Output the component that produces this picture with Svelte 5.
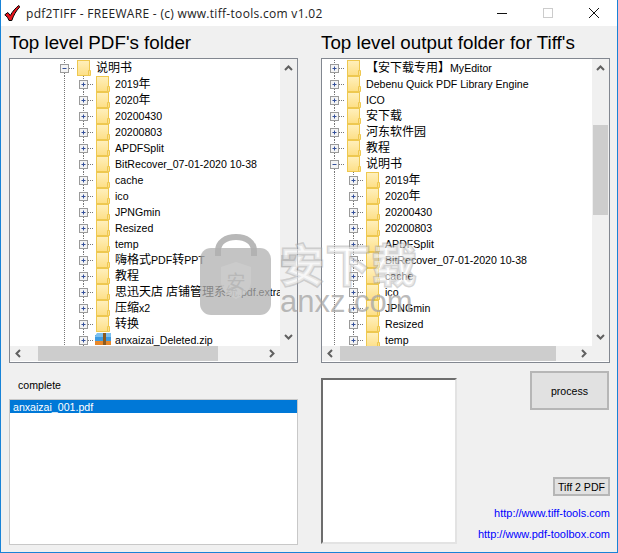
<script lang="ts">
	interface Row {
		level: number;
		label: string;
		open?: boolean;
		zip?: boolean;
	}

	const subFolders = [
		'2019年',
		'2020年',
		'20200430',
		'20200803',
		'APDFSplit',
		'BitRecover_07-01-2020 10-38',
		'cache',
		'ico',
		'JPNGmin',
		'Resized',
		'temp'
	];

	const leftRows: Row[] = [
		{ level: 0, label: '说明书', open: true },
		...subFolders.map((label) => ({ level: 1, label })),
		{ level: 1, label: '嗨格式PDF转PPT' },
		{ level: 1, label: '教程' },
		{ level: 1, label: '思迅天店 店铺管理系统.pdf.extracted' },
		{ level: 1, label: '压缩x2' },
		{ level: 1, label: '转换' },
		{ level: 1, label: 'anxaizai_Deleted.zip', zip: true }
	];

	const rightRows: Row[] = [
		{ level: 0, label: '【安下载专用】MyEditor' },
		{ level: 0, label: 'Debenu Quick PDF Library Engine' },
		{ level: 0, label: 'ICO' },
		{ level: 0, label: '安下载' },
		{ level: 0, label: '河东软件园' },
		{ level: 0, label: '教程' },
		{ level: 0, label: '说明书', open: true },
		...subFolders.map((label) => ({ level: 1, label }))
	];

	const trees = [
		{ name: 'left', title: "Top level PDF's folder", rows: leftRows },
		{ name: 'right', title: "Top level output folder for Tiff's", rows: rightRows }
	];

	// latin runs are narrower than the CJK ones in the original UI font
	const cjk = /([\u3000-\u9fff\uff00-\uffef]+)/;
	const splitLabel = (label: string) => label.split(cjk).filter(Boolean);
</script>

{#snippet chevron(d: string)}
	<svg width="11" height="11" viewBox="0 0 11 11"><path {d} fill="none" stroke="#606060" stroke-width="2" /></svg>
{/snippet}

<div class="window">
	<header class="titlebar">
		<svg class="app-icon" width="16" height="16" viewBox="0 0 16 16">
			<path d="M.8 9.800 3.800 7.500 6.300 10.500C8.500 6.500 11.500 3 14.800.5L15.800 1.800C12 6 9.500 10.500 7.800 15.500H5C4.200 13.200 2.700 11.200.8 9.800Z" fill="#e8141c" stroke="#000" stroke-width="1" />
		</svg>
		<span class="title">pdf2TIFF - FREEWARE - (c) www.tiff-tools.com v1.02</span>
		<div class="controls">
			<svg width="46" height="26" viewBox="0 0 46 26"><path d="M18 13.500h10" stroke="#111" /></svg>
			<svg width="46" height="26" viewBox="0 0 46 26"><rect x="18.500" y="8.500" width="9" height="9" fill="none" stroke="#ccc" /></svg>
			<svg width="46" height="26" viewBox="0 0 46 26"><path d="M18 8l10 10M28 8l-10 10" stroke="#111" /></svg>
		</div>
	</header>

	<main class="content">
		{#each trees as tree}
			<section class="tree-col">
				<h1>{tree.title}</h1>
				<div class="tree {tree.name}">
					<div class="rows">
						{#each tree.rows as row}
							<div class="row">
								{#if row.level === 1}<span class="guide"></span>{/if}
								<span class="expander">
									<svg width="19" height="16" viewBox="0 0 19 16">
										<path class="dots" d="M9.500 0v4M9.500 13v3M14 8.500h5" />
										<rect x="5.500" y="4.500" width="8" height="8" fill="#f4f4f4" stroke="#9a9a9a" />
										<path d={row.open ? 'M7.500 8.500h4' : 'M7.500 8.500h4M9.500 6.500v4'} stroke="#34509a" />
									</svg>
								</span>
								{#if row.zip}
									<svg class="icon" width="19" height="16" viewBox="0 0 19 16">
										<path d="M2 3h16v10H2z" fill="#3f9be0" />
										<path d="M2 4l2-3h14v4H2z" fill="#7cc0f0" />
										<path d="M2 9h16v4H2z" fill="#e8882a" />
										<path d="M10 1h3v12h-3z" fill="#8a5a20" />
									</svg>
								{:else}
									<svg class="icon" width="19" height="16" viewBox="0 0 19 16">
										<defs>
											<linearGradient id="fold-{tree.name}" x1="0" x2="0" y1="0" y2="1">
												<stop offset="0" stop-color="#fff0bd" />
												<stop offset="1" stop-color="#fddf86" />
											</linearGradient>
										</defs>
										<rect x="3.500" y="0.500" width="12" height="15" fill="url(#fold-{tree.name})" stroke="#eec850" />
										<path d="M14.500 10.500h2v5h-2z" fill="#fde08c" stroke="#eec850" />
									</svg>
								{/if}
								<span class="label">
									{#each splitLabel(row.label) as part}
										<span class:han={cjk.test(part)}>{part}</span>
									{/each}
								</span>
							</div>
						{/each}
					</div>
					<div class="vbar">
						{@render chevron('M2 7l3.500-3.500L9 7')}
						<div class="vtrack"><div class="thumb"></div></div>
						{@render chevron('M2 4l3.500 3.500L9 4')}
					</div>
					<div class="hbar">
						{@render chevron('M7 2L3.500 5.500 7 9')}
						<div class="htrack"><div class="thumb"></div></div>
						{@render chevron('M4 2l3.500 3.500L4 9')}
					</div>
					<div class="corner"></div>
				</div>
			</section>
		{/each}

		<section class="status">
			<p class="state">complete</p>
			<ul class="files">
				<li>anxaizai_001.pdf</li>
			</ul>
		</section>

		<section class="output">
			<div class="preview"></div>
			<div class="actions">
				<button class="process">process</button>
				<button class="convert">Tiff 2 PDF</button>
				<a href="#tiff">http://www.tiff-tools.com</a>
				<a href="#pdf">http://www.pdf-toolbox.com</a>
			</div>
		</section>
	</main>

	<div class="watermark" aria-hidden="true">
		<svg width="72" height="82" viewBox="0 0 72 82">
			<path d="M18 22V17C18 8 26 3 36 3s18 5 18 14v5" fill="none" stroke="#b8b8b8" stroke-width="6" />
			<rect x="0" y="14" width="71" height="67" rx="11" fill="#b0b0b0" fill-opacity=".75" />
			<path d="M36 28l15 5v15c0 8-7 13-15 17-8-4-15-9-15-17V33z" fill="#cfcfcf" fill-opacity=".7" />
			<text x="36" y="55" text-anchor="middle" font-size="19" fill="#b8b8b8">安</text>
		</svg>
		<div class="mark-text">
			<span class="mark-cn">安下载</span>
			<span class="mark-en">anxz.com</span>
		</div>
	</div>
</div>

<style>
	:global(body) {
		margin: 0;
		background: #f0f0f0;
	}

	.window {
		position: relative;
		width: 618px;
		height: 553px;
		box-sizing: border-box;
		border: 1px solid #1883d7;
		border-top: 0;
		background: #f0f0f0;
		font-family: 'Liberation Sans', 'Noto Sans CJK SC', sans-serif;
		font-size: 10.6px;
		color: #000;
		overflow: hidden;
	}

	.titlebar {
		display: flex;
		align-items: center;
		height: 26px;
		background: #fff;
	}

	.app-icon {
		margin: 0 6px 0 3px;
	}

	.title {
		flex: 1;
		font-family: 'Open Sans', sans-serif;
		font-size: 12px;
		letter-spacing: 0.3px;
		color: #222;
		white-space: nowrap;
	}

	.controls {
		display: flex;
	}

	.content {
		display: grid;
		grid-template-columns: 289px 289px;
		column-gap: 23px;
		padding: 0 8px;
	}

	h1 {
		margin: 0;
		height: 32px;
		font-size: 18.8px;
		font-weight: 400;
		line-height: 34px;
		white-space: nowrap;
	}

	.tree {
		display: grid;
		grid-template-columns: 1fr 17px;
		grid-template-rows: 1fr 16px;
		box-sizing: border-box;
		height: 305px;
		border: 1px solid #828790;
		background: #fff;
		overflow: hidden;
	}

	.rows {
		padding-top: 1px;
		overflow: hidden;
		white-space: nowrap;
	}

	.tree.left .rows {
		padding-left: 45px;
	}

	.tree.right .rows {
		padding-left: 3px;
	}

	.row {
		display: flex;
		align-items: center;
		height: 16px;
	}

	.guide {
		flex: none;
		width: 19px;
		height: 16px;
		background: repeating-linear-gradient(#777 0 1px, transparent 1px 2px) 9px 0 / 1px 100% no-repeat;
	}

	.expander {
		flex: none;
		height: 16px;
	}

	.expander svg,
	.icon {
		display: block;
	}

	.dots {
		stroke: #777;
		stroke-dasharray: 1 1;
		fill: none;
	}

	.icon {
		flex: none;
		margin-right: 3px;
	}

	.label {
		line-height: 16px;
	}

	.han {
		font-size: 12px;
	}

	.vbar {
		display: flex;
		flex-direction: column;
		align-items: center;
		justify-content: space-between;
		background: #f0f0f0;
		padding: 4px 0;
		box-sizing: border-box;
		min-height: 0;
	}

	.vtrack {
		flex: 1;
		width: 100%;
		padding: 0 1px;
		box-sizing: border-box;
	}

	.tree.left .vtrack .thumb {
		margin-top: 181px;
		height: 12px;
		background: #cdcdcd;
	}

	.tree.right .vtrack .thumb {
		margin-top: 51px;
		height: 90px;
		background: #cdcdcd;
	}

	.hbar {
		display: flex;
		align-items: center;
		height: 15px;
		background: #f0f0f0;
		padding: 0 3px;
	}

	.hbar svg {
		flex: none;
	}

	.htrack {
		flex: 1;
		height: 15px;
	}

	.htrack .thumb {
		height: 15px;
		background: #cdcdcd;
	}

	.tree.left .htrack .thumb {
		width: 180px;
		margin-left: 14px;
	}

	.tree.right .htrack .thumb {
		width: 216px;
		margin-left: 4px;
	}

	.corner {
		height: 15px;
		background: #f0f0f0;
	}

	.state {
		margin: 15px 0 0 9px;
		height: 21px;
		line-height: 14px;
	}

	.files {
		box-sizing: border-box;
		height: 146px;
		margin: 0;
		padding: 0;
		list-style: none;
		background: #fff;
		border: 1px solid #c8c8c8;
	}

	.files li {
		height: 13px;
		padding-left: 3px;
		background: #0078d7;
		color: #fff;
		line-height: 14px;
	}

	.output {
		display: flex;
		justify-content: space-between;
		padding-top: 15px;
	}

	.preview {
		box-sizing: border-box;
		width: 136px;
		height: 166px;
		background: #fff;
		border: 2px solid #e3e3e3;
		border-top-color: #6d6d6d;
		border-left-color: #6d6d6d;
	}

	.actions {
		display: flex;
		flex-direction: column;
		align-items: flex-end;
		margin-top: -7px;
	}

	button {
		box-sizing: border-box;
		padding: 0;
		font: inherit;
		color: #000;
		background: #e1e1e1;
		border: 2px solid #b6b6b6;
		white-space: nowrap;
	}

	.process {
		width: 79px;
		height: 39px;
		margin: 0 1px 67px 0;
	}

	.convert {
		width: 57px;
		height: 19px;
		margin-bottom: 10px;
	}

	a {
		color: #0000ff;
		font-size: 11px;
		text-decoration: none;
		line-height: 14px;
		margin-bottom: 7px;
		white-space: nowrap;
	}

	.watermark {
		position: absolute;
		left: 199px;
		top: 234px;
		display: flex;
		gap: 8px;
		pointer-events: none;
	}

	.mark-text {
		display: flex;
		flex-direction: column;
		padding-top: 10px;
	}

	.mark-cn {
		font-size: 44px;
		line-height: 46px;
		font-weight: 700;
		letter-spacing: 2px;
		color: rgba(255, 255, 255, 0.5);
		-webkit-text-stroke: 3px rgba(170, 170, 170, 0.5);
		paint-order: stroke fill;
	}

	.mark-en {
		font-size: 31px;
		line-height: 24px;
		color: rgba(165, 165, 165, 0.75);
	}
</style>
